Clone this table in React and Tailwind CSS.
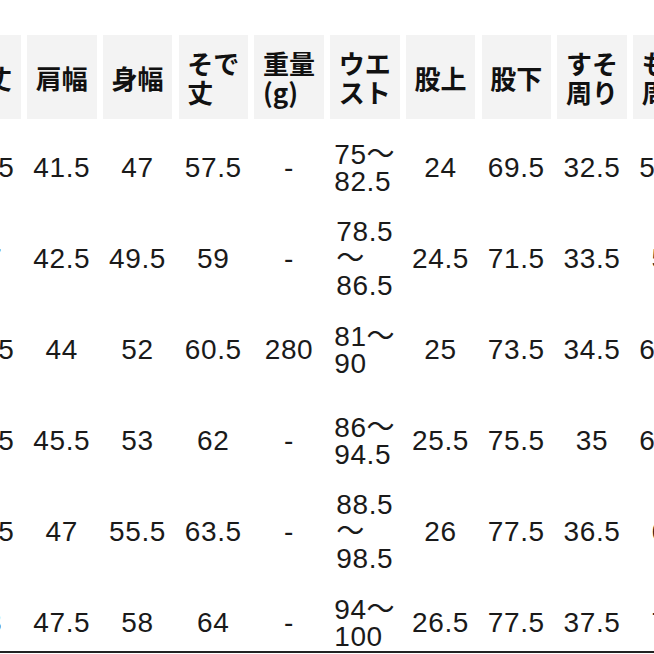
import React from "react";

const headers = [
  ["着丈"],
  ["肩幅"],
  ["身幅"],
  ["そで", "丈"],
  ["重量", "(g)"],
  ["ウエ", "スト"],
  ["股上"],
  ["股下"],
  ["すそ", "周り"],
  ["もも", "周り"],
];

const rows = [
  ["66.5", "41.5", "47", "57.5", "-", ["75～", "82.5"], "24", "69.5", "32.5", "57.5"],
  ["67", "42.5", "49.5", "59", "-", ["78.5", "～", "86.5"], "24.5", "71.5", "33.5", "59"],
  ["68.5", "44", "52", "60.5", "280", ["81～", "90"], "25", "73.5", "34.5", "60.5"],
  ["70.5", "45.5", "53", "62", "-", ["86～", "94.5"], "25.5", "75.5", "35", "62.5"],
  ["72.5", "47", "55.5", "63.5", "-", ["88.5", "～", "98.5"], "26", "77.5", "36.5", "64"],
  ["73", "47.5", "58", "64", "-", ["94～", "100"], "26.5", "77.5", "37.5", "70"],
];

function Lines({ lines }) {
  return (
    <span className="inline-block text-left">
      {lines.map((l, i) => (
        <React.Fragment key={i}>
          {i > 0 && <br />}
          {l}
        </React.Fragment>
      ))}
    </span>
  );
}

export default function App() {
  return (
    <div className="w-[654px] h-[653px] overflow-hidden bg-white border-b-2 border-[#222]">
      <div className="pt-[35px] ml-[-48.75px] grid grid-cols-[repeat(10,69.5px)] gap-x-[6.25px] gap-y-[6px]">
        {/* header row */}
        {headers.map((h, i) => (
          <div
            key={"h" + i}
            className="h-[84px] flex items-center justify-center bg-[#f3f3f3] text-[#111] font-bold text-[26px] leading-[29px] font-['Noto_Sans_CJK_JP',sans-serif]"
          >
            <Lines lines={h} />
          </div>
        ))}

        {/* data rows */}
        {rows.map((r, ri) =>
          r.map((v, ci) => (
            <div
              key={ri + "-" + ci}
              className="h-[85px] flex items-center justify-center text-[#1a1a1a] text-[28px] leading-[27px] tracking-[0.6px] font-['Liberation_Sans','Noto_Sans_CJK_JP',sans-serif] whitespace-nowrap"
            >
              {Array.isArray(v) ? <Lines lines={v} /> : v}
            </div>
          ))
        )}
      </div>
    </div>
  );
}
